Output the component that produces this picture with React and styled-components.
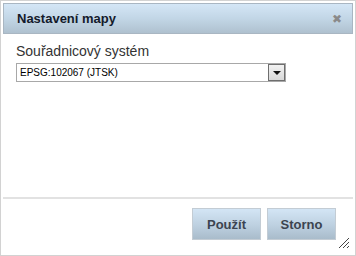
import React from 'react'
import styled, { createGlobalStyle } from 'styled-components'

const Global = createGlobalStyle`
  html, body {
    margin: 0;
    padding: 0;
    background: #fff;
  }
`

const Dialog = styled.div`
  position: relative;
  width: 356px;
  height: 256px;
  box-sizing: border-box;
  border: 1px solid #d2d2d2;
  padding: 2px;
  display: flex;
  flex-direction: column;
  background: #fff;
  font-family: "Liberation Sans", Arial, sans-serif;
`

const TitleBar = styled.div`
  height: 31px;
  box-sizing: border-box;
  border: 1px solid #a9b6c2;
  background: linear-gradient(to bottom, #d4e6f6 0%, #c2d6e6 50%, #afc1cf 100%);
  display: flex;
  align-items: center;
  justify-content: space-between;
  padding: 0 10px 0 13px;
`

const Title = styled.span`
  font-weight: bold;
  font-size: 13px;
  color: #141a2a;
`

const Close = styled.span`
  font-family: "DejaVu Sans", sans-serif;
  font-weight: bold;
  font-size: 12px;
  color: #8a8a8a;
  line-height: 1;
`

const Content = styled.div`
  flex: 1;
  padding: 9px 14px 0 13px;
  border-bottom: 2px solid #e2e2e2;
`

const Label = styled.div`
  font-size: 14px;
  color: #333;
  line-height: 16px;
  margin-bottom: 4px;
`

const Select = styled.div`
  width: 270px;
  height: 19px;
  box-sizing: border-box;
  border: 1px solid #a8a8a8;
  display: flex;
  align-items: center;
  justify-content: space-between;
  padding-left: 3px;
`

const SelectText = styled.span`
  font-size: 10px;
  color: #000;
`

const Arrow = styled.span`
  width: 17px;
  height: 17px;
  box-sizing: border-box;
  border: 1px solid #6e6e6e;
  background: linear-gradient(to bottom, #f2f2f2, #d8d8d8);
  display: flex;
  align-items: center;
  justify-content: center;
  &::after {
    content: '';
    border-left: 4px solid transparent;
    border-right: 4px solid transparent;
    border-top: 4px solid #111;
  }
`

const Footer = styled.div`
  height: 54px;
  box-sizing: border-box;
  display: flex;
  justify-content: flex-end;
  gap: 6px;
  padding: 9px 17px 0 0;
`

const Button = styled.button`
  width: 69px;
  height: 32px;
  box-sizing: border-box;
  border: 1px solid #c3ccd4;
  background: linear-gradient(to bottom, #d3e5f5 0%, #bdd0e0 55%, #a9bccb 100%);
  font-family: "Liberation Sans", Arial, sans-serif;
  font-weight: bold;
  font-size: 13px;
  color: #3c4450;
  padding: 0;
`

const Grip = styled.svg`
  position: absolute;
  right: 5px;
  bottom: 6px;
`

export default function App() {
  return (
    <>
      <Global />
      <Dialog>
        <TitleBar>
          <Title>Nastavení mapy</Title>
          <Close>✖</Close>
        </TitleBar>
        <Content>
          <Label>Souřadnicový systém</Label>
          <Select>
            <SelectText>EPSG:102067 (JTSK)</SelectText>
            <Arrow />
          </Select>
        </Content>
        <Footer>
          <Button>Použít</Button>
          <Button>Storno</Button>
        </Footer>
        <Grip width="12" height="12" viewBox="0 0 12 12">
          <path d="M1 11 L11 1 M5 11 L11 5 M9 11 L11 9" stroke="#444" strokeWidth="1" fill="none" />
        </Grip>
      </Dialog>
    </>
  )
}
